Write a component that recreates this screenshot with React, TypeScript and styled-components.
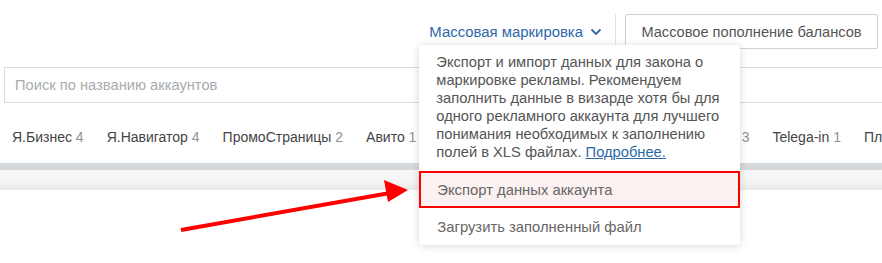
import React from "react";
import styled, { createGlobalStyle } from "styled-components";

const GlobalStyle = createGlobalStyle`
    html, body {
        margin: 0;
        padding: 0;
        background: #fff;
        font-family: "Liberation Sans", Arial, sans-serif;
    }
`;

const tabs = [
    { name: "Я.Бизнес", count: 4 },
    { name: "Я.Навигатор", count: 4 },
    { name: "ПромоСтраницы", count: 2 },
    { name: "Авито", count: 1 },
    { name: "Яндекс.Директ", count: 12 },
    { name: "VK Ads", count: 2 },
    { name: "VK Реклама", count: 3 },
    { name: "Telega-in", count: 1 },
    { name: "Платформы", count: 2 },
];

export default () => {
    return (
        <Page>
            <GlobalStyle />
            <Header>
                <MarkingWrap>
                    <MarkingLink>
                        Массовая маркировка
                        <Chevron viewBox="0 0 12 8">
                            <path d="M1.5 1.5 L6 6 L10.5 1.5" />
                        </Chevron>
                    </MarkingLink>
                    <Dropdown>
                        <Description>
                            Экспорт и импорт данных для закона о маркировке рекламы.
                            Рекомендуем заполнить данные в визарде хотя бы для одного
                            рекламного аккаунта для лучшего понимания необходимых к
                            заполнению полей в XLS файлах. <MoreLink>Подробнее.</MoreLink>
                        </Description>
                        <MenuItem $active>Экспорт данных аккаунта</MenuItem>
                        <MenuItem>Загрузить заполненный файл</MenuItem>
                    </Dropdown>
                </MarkingWrap>
                <Separator />
                <TopUpButton>Массовое пополнение балансов</TopUpButton>
            </Header>
            <Search placeholder="Поиск по названию аккаунтов" />
            <Tabs>
                {tabs.map((t) => (
                    <Tab key={t.name}>
                        {t.name} <Count>{t.count}</Count>
                    </Tab>
                ))}
            </Tabs>
            <Divider />
            <Toolbar />
            <Arrow viewBox="0 0 882 263">
                <line x1="181" y1="230" x2="390" y2="193" />
                <polygon points="408,190 384,180 388,202" />
            </Arrow>
        </Page>
    );
};

const Page = styled.div`
    position: relative;
    width: 882px;
    height: 263px;
    overflow: hidden;
`;

const Header = styled.div`
    display: flex;
    justify-content: flex-end;
    align-items: center;
    padding: 14px 4px 0 0;
    height: 35px;
`;

const MarkingWrap = styled.div`
    position: relative;
    height: 100%;
    display: flex;
    align-items: center;
`;

const MarkingLink = styled.span`
    display: flex;
    align-items: center;
    gap: 7px;
    font-size: 14.9px;
    color: #2e68a8;
    cursor: pointer;
`;

const Chevron = styled.svg`
    width: 12px;
    height: 8px;
    fill: none;
    stroke: #2e68a8;
    stroke-width: 1.8;
`;

const Separator = styled.div`
    width: 1px;
    align-self: stretch;
    background: #e3e3e3;
    margin: 0 9px 0 13px;
`;

const TopUpButton = styled.button`
    height: 35px;
    width: 253px;
    border: 1px solid #d0d0d0;
    border-radius: 2px;
    background: #fff;
    color: #555;
    font-family: inherit;
    font-size: 14.6px;
`;

const Search = styled.input`
    display: block;
    box-sizing: border-box;
    margin: 18px 0 0 4px;
    width: 900px;
    height: 36px;
    border: 1px solid #dcdcdc;
    padding: 0 10px;
    font-family: inherit;
    font-size: 14.7px;
    outline: none;
    &::placeholder {
        color: #a7abb0;
    }
`;

const Tabs = styled.div`
    box-sizing: border-box;
    display: flex;
    gap: 23px;
    height: 60px;
    align-items: center;
    padding: 8px 12px 0;
    white-space: nowrap;
`;

const Tab = styled.span`
    font-size: 14px;
    color: #444;
`;

const Count = styled.span`
    color: #8c9299;
`;

const Divider = styled.div`
    height: 7px;
    background: #d6d9dc;
`;

const Toolbar = styled.div`
    height: 20px;
    background: linear-gradient(#f8f8f8, #f5f5f5 60%, #e8e8e8);
`;

const Dropdown = styled.div`
    position: absolute;
    top: 31px;
    left: -10px;
    width: 321px;
    background: #fff;
    border-radius: 4px;
    box-shadow: 0 1px 8px rgba(0, 0, 0, 0.16);
    padding: 8px 0 0;
    z-index: 2;
`;

const Description = styled.div`
    padding: 0 17px 10px;
    font-size: 14.7px;
    line-height: 18px;
    color: #555;
`;

const MoreLink = styled.a`
    color: #2e68a8;
    text-decoration: underline;
`;

const MenuItem = styled.div<{ $active?: boolean }>`
    box-sizing: border-box;
    height: 37px;
    display: flex;
    align-items: center;
    padding: 0 18px;
    font-size: 14.8px;
    color: #666;
    background: ${(p) => (p.$active ? "#fbf1f1" : "transparent")};
    outline: ${(p) => (p.$active ? "2px solid #f00" : "none")};
    outline-offset: -2px;
`;

const Arrow = styled.svg`
    position: absolute;
    inset: 0;
    width: 882px;
    height: 263px;
    pointer-events: none;
    z-index: 3;
    line {
        stroke: #f00;
        stroke-width: 4;
    }
    polygon {
        fill: #f00;
    }
`;
